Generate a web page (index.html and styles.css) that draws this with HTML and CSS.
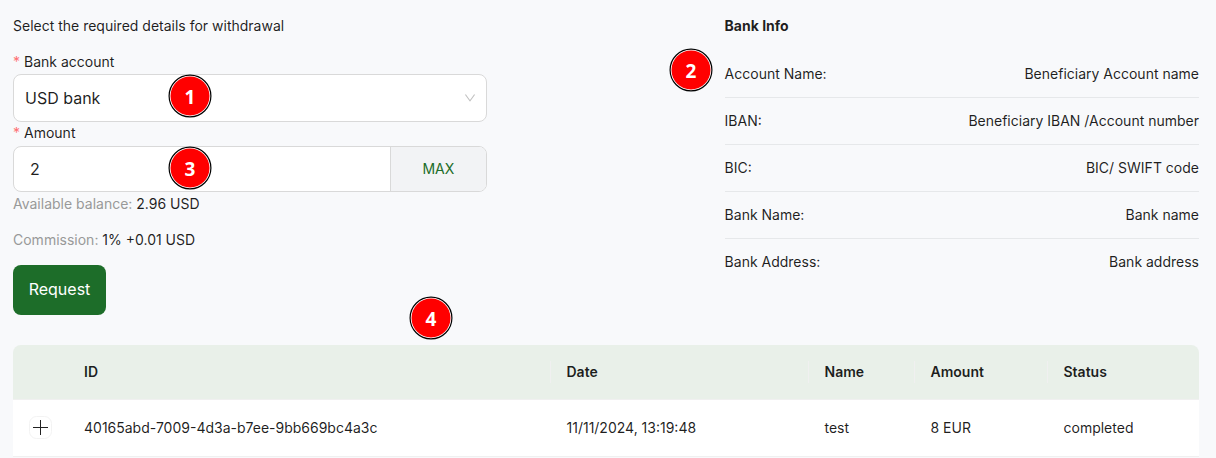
FILE: index.html
```html
<!DOCTYPE html>
<html lang="en">
<head>
    <meta charset="UTF-8">
    <meta name="viewport" content="width=device-width, initial-scale=1.0">
    <title>Withdrawal</title>
    <link rel="stylesheet" href="styles.css">
</head>
<body>
    <div class="page">
        <div class="top">
            <form class="withdraw">
                <p class="intro">Select the required details for withdrawal</p>

                <div class="label"><span class="required">*</span>Bank account</div>
                <div class="select">
                    <span>USD bank</span>
                    <svg class="arrow" viewBox="64 64 896 896" width="12" height="12">
                        <path d="M884 256h-75c-5.100 0-9.900 2.500-12.900 6.600L512 654.200 227.900 262.600c-3-4.100-7.800-6.600-12.900-6.600h-75c-6.500 0-10.300 7.400-6.500 12.700l352.600 486.100c12.800 17.600 39 17.600 51.700 0l352.600-486.100c3.900-5.300.1-12.700-6.400-12.700z" fill="currentColor"/>
                    </svg>
                </div>

                <div class="label label-amount"><span class="required">*</span>Amount</div>
                <div class="amount">
                    <div class="amount-value">2</div>
                    <div class="amount-max">MAX</div>
                </div>

                <p class="balance"><span class="muted">Available balance:</span> 2.96 USD</p>
                <p class="commission"><span class="muted">Commission:</span> 1% +0.01 USD</p>

                <button type="button" class="request">Request</button>
            </form>

            <div class="bank">
                <h4>Bank Info</h4>
                <div class="bank-row"><span>Account Name:</span><span>Beneficiary Account name</span></div>
                <div class="bank-row"><span>IBAN:</span><span>Beneficiary IBAN /Account number</span></div>
                <div class="bank-row"><span>BIC:</span><span>BIC/ SWIFT code</span></div>
                <div class="bank-row"><span>Bank Name:</span><span>Bank name</span></div>
                <div class="bank-row"><span>Bank Address:</span><span>Bank address</span></div>
            </div>
        </div>

        <table class="history">
            <colgroup>
                <col class="col-expand">
                <col class="col-id">
                <col class="col-date">
                <col class="col-name">
                <col class="col-amount">
                <col>
            </colgroup>
            <thead>
                <tr>
                    <th></th>
                    <th class="split">ID</th>
                    <th class="split">Date</th>
                    <th class="split">Name</th>
                    <th class="split">Amount</th>
                    <th>Status</th>
                </tr>
            </thead>
            <tbody>
                <tr>
                    <td class="expand-cell">
                        <svg class="expand" viewBox="0 0 23 23" width="23" height="23">
                            <rect x=".5" y=".5" width="22" height="22" rx="7" fill="#fff" stroke="#f3f3f3"/>
                            <path d="M4 11.500h15M11.500 4v15" stroke="#222" stroke-width="1"/>
                        </svg>
                    </td>
                    <td>40165abd-7009-4d3a-b7ee-9bb669bc4a3c</td>
                    <td>11/11/2024, 13:19:48</td>
                    <td>test</td>
                    <td>8 EUR</td>
                    <td>completed</td>
                </tr>
            </tbody>
        </table>

        <!-- step markers -->
        <svg class="marker marker-1" viewBox="0 0 44 44"><circle class="rim" cx="22" cy="22" r="20.900"/><circle class="disc" cx="22" cy="22" r="19.500"/><text x="22" y="30">1</text></svg>
        <svg class="marker marker-2" viewBox="0 0 44 44"><circle class="rim" cx="22" cy="22" r="20.900"/><circle class="disc" cx="22" cy="22" r="19.500"/><text x="22" y="30">2</text></svg>
        <svg class="marker marker-3" viewBox="0 0 44 44"><circle class="rim" cx="22" cy="22" r="20.900"/><circle class="disc" cx="22" cy="22" r="19.500"/><text x="22" y="30">3</text></svg>
        <svg class="marker marker-4" viewBox="0 0 44 44"><circle class="rim" cx="22" cy="22" r="20.900"/><circle class="disc" cx="22" cy="22" r="19.500"/><text x="22" y="30">4</text></svg>
    </div>
</body>
</html>
```
FILE: styles.css
```css
* {
    box-sizing: border-box;
}
body {
    margin: 0;
    background: #f8f9fb;
    color: rgba(0, 0, 0, 0.88);
    font-family: Inter, sans-serif;
    font-size: 14px;
    line-height: 22px;
    overflow: hidden;
}
p, h4 {
    margin: 0;
}
.page {
    position: relative;
    height: 458px;
    padding: 15px 17px 0 13px;
}
.top {
    display: flex;
    justify-content: space-between;
    height: 330px;
}
.withdraw, .bank {
    width: 474.4px;
}
.intro {
    margin-bottom: 14px;
}
.label {
    height: 23px;
}
.label-amount {
    height: 24px;
}
.required {
    margin-right: 4px;
    color: #ff7073;
}
.select {
    display: flex;
    align-items: center;
    justify-content: space-between;
    height: 48px;
    padding: 0 10px 0 11px;
    border: 1px solid #d9d9d9;
    border-radius: 8px;
    background: #fff;
    font-size: 16px;
}
.arrow {
    color: rgba(0, 0, 0, 0.25);
}
.amount {
    display: flex;
    height: 46px;
    border: 1px solid #d9d9d9;
    border-radius: 8px;
    background: #fff;
    overflow: hidden;
}
.amount-value {
    flex: 1;
    padding-left: 16px;
    font-size: 16px;
    line-height: 44px;
}
.amount-max {
    width: 96px;
    padding-right: 1px;
    border-left: 1px solid #d9d9d9;
    background: #f2f3f5;
    color: #1d6d29;
    line-height: 44px;
    text-align: center;
}
.balance {
    margin: 1px 0 14px;
}
.muted {
    color: #999;
}
.request {
    display: block;
    width: 93px;
    height: 50px;
    margin-top: 14px;
    padding: 0 0 2px;
    border: 0;
    border-radius: 8px;
    background: #1d6d29;
    color: #fff;
    font-family: inherit;
    font-size: 16px;
}
.bank h4 {
    margin-bottom: 13px;
    font-size: 14px;
    font-weight: 700;
}
.bank-row {
    display: flex;
    justify-content: space-between;
    height: 47px;
    padding-top: 12px;
    border-bottom: 1px solid #e6e8ea;
}
.bank h4 + .bank-row {
    height: 48px;
    padding-top: 13px;
}
.bank-row:last-child {
    border-bottom: 0;
}
.history {
    width: 1186px;
    table-layout: fixed;
    border-spacing: 0;
}
.col-expand {
    width: 55px;
}
.col-id {
    width: 482.5px;
}
.col-date {
    width: 258px;
}
.col-name {
    width: 106px;
}
.col-amount {
    width: 133px;
}
.history th {
    position: relative;
    height: 55px;
    padding: 0 16px;
    border-bottom: 1px solid #f0f0f0;
    background: #e9f0e9;
    font-weight: 600;
    text-align: left;
}
.history th:first-child {
    border-top-left-radius: 8px;
}
.history th:last-child {
    border-top-right-radius: 8px;
}
.history .split::after {
    content: "";
    position: absolute;
    top: 16px;
    right: 0;
    width: 1px;
    height: 22px;
    background: #f0f0f0;
}
.history td {
    height: 57px;
    padding: 0 16px;
    border-bottom: 1px solid #f0f0f0;
    background: #fff;
}
.expand {
    display: block;
    position: relative;
    top: -1px;
}
.marker {
    position: absolute;
    width: 44px;
    height: 44px;
}
.marker .rim {
    fill: #fff;
    stroke: #000;
    stroke-width: 1.2;
}
.marker .disc {
    fill: #f00;
}
.marker text {
    fill: #fff;
    font: bold 19px "Noto Sans", sans-serif;
    text-anchor: middle;
}
.marker-1 {
    left: 168px;
    top: 74px;
}
.marker-2 {
    left: 669px;
    top: 48px;
}
.marker-3 {
    left: 168px;
    top: 146px;
}
.marker-4 {
    left: 409px;
    top: 296px;
}
```
